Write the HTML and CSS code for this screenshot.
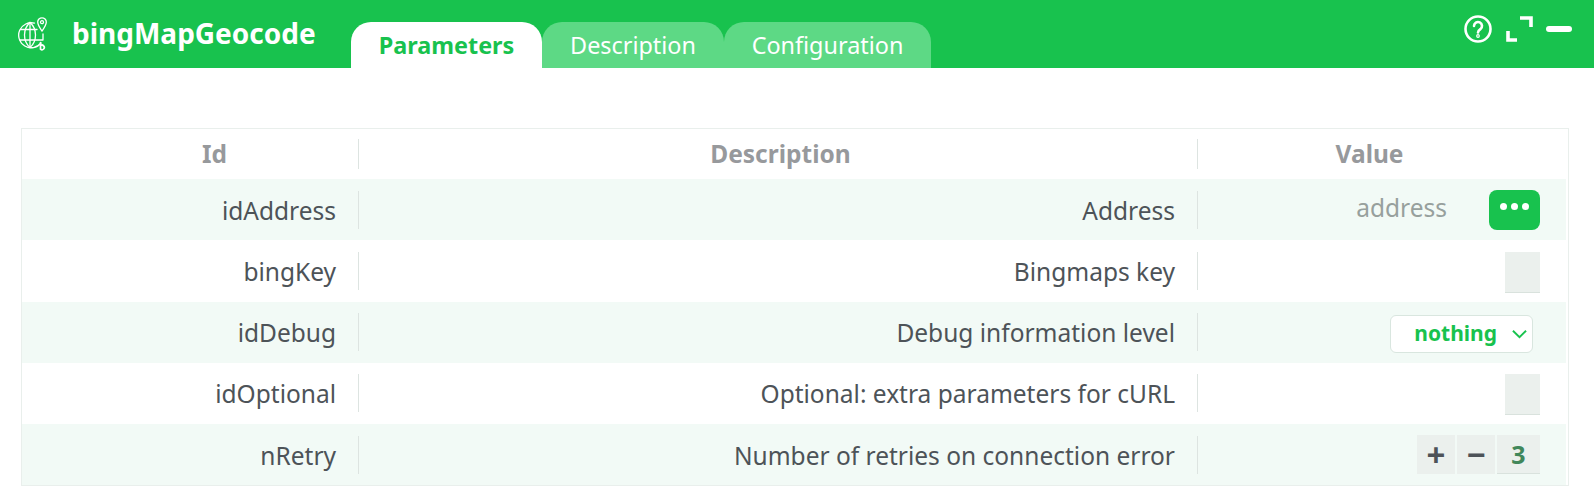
FILE: index.html
```html
<!DOCTYPE html>
<html lang="en">
<head>
<meta charset="utf-8">
<title>bingMapGeocode</title>
<link rel="stylesheet" href="styles.css">
</head>
<body>
<header class="header">
  <svg class="logo" viewBox="0 0 30 34" fill="none" stroke="#fff" stroke-width="1.300" stroke-linecap="round" stroke-linejoin="round">
    <path d="M16.500 6.200A12.500 12.500 0 1 0 23 26"/>
    <path d="M12 5.500C8 9 6.500 13.500 6.500 18s1.500 9 5.500 12.500"/>
    <path d="M12 5.500C16 9 17.500 13.500 17.500 18s-1.500 9-5.500 12.500"/>
    <path d="M2.500 12.500H19M2 23H25V17M12 5.500V30.500"/>
    <path d="M24 .8a4.300 4.300 0 0 1 4.300 4.300c0 3-4.300 9-4.300 9s-4.300-6-4.300-9A4.300 4.300 0 0 1 24 .8z"/>
    <circle cx="24" cy="5.200" r="1.500"/>
    <path d="M22.500 25.500V32M22.500 32.200a2.300 2.300 0 1 0 0-3.600" stroke-width="1.700"/>
  </svg>
  <h1 class="title">bingMapGeocode</h1>
  <nav class="tabs">
    <a class="tab tab-active">Parameters</a>
    <a class="tab tab-params">Description</a>
    <a class="tab tab-config">Configuration</a>
  </nav>
  <div class="actions">
    <svg class="ico-help" viewBox="0 0 28 28" fill="none" stroke="#fff" stroke-width="2.600" stroke-linecap="round">
      <circle cx="14" cy="14" r="12.500"/>
      <path d="M10 11a4 4 0 1 1 6.400 3.200c-1.500 1-2.400 1.800-2.400 3.300"/>
      <circle cx="14" cy="21" r=".6"/>
    </svg>
    <svg class="ico-max" viewBox="0 0 27 26" fill="none" stroke="#fff" stroke-width="3.600">
      <path d="M14 2H25V11M2 15V24H11"/>
    </svg>
    <span class="ico-min"></span>
  </div>
</header>
<main class="content">
  <div class="table">
    <div class="row row-head">
      <div class="cell col-id">Id</div>
      <div class="cell col-desc">Description</div>
      <div class="cell col-val">Value</div>
    </div>
    <div class="row row-odd">
      <div class="cell col-id">idAddress</div>
      <div class="cell col-desc">Address</div>
      <div class="cell col-val">
        <span class="placeholder">address</span>
        <button class="more"><i></i><i></i><i></i></button>
      </div>
    </div>
    <div class="row">
      <div class="cell col-id">bingKey</div>
      <div class="cell col-desc">Bingmaps key</div>
      <div class="cell col-val"><span class="empty"></span></div>
    </div>
    <div class="row row-odd">
      <div class="cell col-id">idDebug</div>
      <div class="cell col-desc">Debug information level</div>
      <div class="cell col-val col-select">
        <div class="select">
          <span>nothing</span>
          <svg class="chev" viewBox="0 0 16 10" fill="none" stroke="#18c24e" stroke-width="2"><path d="M1 1.500L8 8.500L15 1.500"/></svg>
        </div>
      </div>
    </div>
    <div class="row">
      <div class="cell col-id">idOptional</div>
      <div class="cell col-desc">Optional: extra parameters for cURL</div>
      <div class="cell col-val"><span class="empty"></span></div>
    </div>
    <div class="row row-odd">
      <div class="cell col-id">nRetry</div>
      <div class="cell col-desc">Number of retries on connection error</div>
      <div class="cell col-val">
        <div class="stepper">
          <span class="step step-plus">+</span>
          <span class="step step-minus">−</span>
          <span class="step step-num">3</span>
        </div>
      </div>
    </div>
  </div>
</main>
</body>
</html>
```
FILE: styles.css
```css
* { box-sizing: border-box; }
html, body { margin: 0; padding: 0; background: #fff; }
body { font-family: "Noto Sans", sans-serif; color: #4d5358; height: 500px; overflow: hidden; }

.header {
  height: 68px;
  background: #18c24e;
  display: flex;
  align-items: flex-start;
  padding-left: 18px;
  position: relative;
}
.logo { width: 30px; height: 34px; margin-top: 17px; flex: none; }
.title {
  margin: 14px 0 0 24px;
  width: 279px;
  font-size: 28px;
  line-height: 38px;
  font-weight: 700;
  color: #fff;
  flex: none;
}
.tabs { display: flex; align-self: flex-end; height: 46px; }
.tab {
  height: 46px;
  line-height: 46px;
  font-size: 23.400px;
  text-align: center;
  color: #fff;
  background: #5dd985;
  border-radius: 20px 20px 0 0;
}
.tab-active { width: 191px; background: #fff; color: #18c24e; font-weight: 700; }
.tab-params { width: 182px; }
.tab-config { width: 207px; }
.actions {
  margin-left: auto;
  display: flex;
  align-items: center;
  height: 28px;
  margin-top: 15px;
  margin-right: 22px;
  gap: 13px;
}
.ico-help { width: 28px; height: 28px; margin-right: 1px; }
.ico-max { width: 27px; height: 26px; }
.ico-min { width: 26px; height: 6px; background: #fff; border-radius: 3px; }

.content { padding: 60px 25px 0 21px; }
.table { border: 1px solid #e9efec; padding-right: 2px; }
.row { display: grid; grid-template-columns: 337px 839px 1fr; height: 61.310px; align-items: center; }
.row-head { height: 49.910px; font-weight: 700; color: #97999c; }
.row-odd { background: #f2faf6; }
.cell { font-size: 24.500px; line-height: 39px; height: 38px; text-align: right; padding-right: 22px; }
.col-id, .col-desc { border-right: 1px solid #dde4e1; }
.row-head .cell { text-align: center; padding-right: 0; height: 30px; line-height: 30px; }
.row-head .col-id { padding-left: 49px; }
.row-head .col-desc { padding-left: 5px; }
.col-val { display: flex; align-items: center; justify-content: flex-end; padding-right: 26px; }
.row-head .col-val { justify-content: center; padding-right: 25px; }
.placeholder { color: #97a09d; margin-right: 42px; margin-top: -4px; }
.more {
  width: 51px;
  height: 40px;
  padding: 0 0 6px;
  border: 0;
  background: #18c24e;
  border-radius: 8px;
  display: flex;
  align-items: center;
  justify-content: center;
  gap: 4px;
}
.more i { width: 7px; height: 7px; border-radius: 50%; background: #fff; }
.empty { width: 35px; height: 41px; margin-top: 3px; background: #ebf0ed; border-bottom: 1px solid #d9e2dd; }
.col-select { padding-right: 33px; }
.select {
  width: 143px;
  height: 38px;
  margin-top: 3px;
  background: #fff;
  border: 1px solid #d9e6df;
  border-radius: 6px;
  display: flex;
  align-items: center;
  justify-content: flex-end;
  padding-right: 5px;
  font-size: 21px;
  font-weight: 700;
  color: #18c24e;
  gap: 15px;
}
.chev { width: 15px; height: 10px; }
.stepper { display: flex; gap: 2px; height: 39px; }
.step { background: #ebf0ed; display: flex; align-items: center; justify-content: center; font-weight: 700; height: 39px; }
.step-plus { width: 38px; font-size: 33px; }
.step-minus { width: 38px; font-size: 33px; }
.step-num { width: 43px; color: #41875a; font-size: 25px; border-bottom: 1px solid #d9e2dd; }
```
